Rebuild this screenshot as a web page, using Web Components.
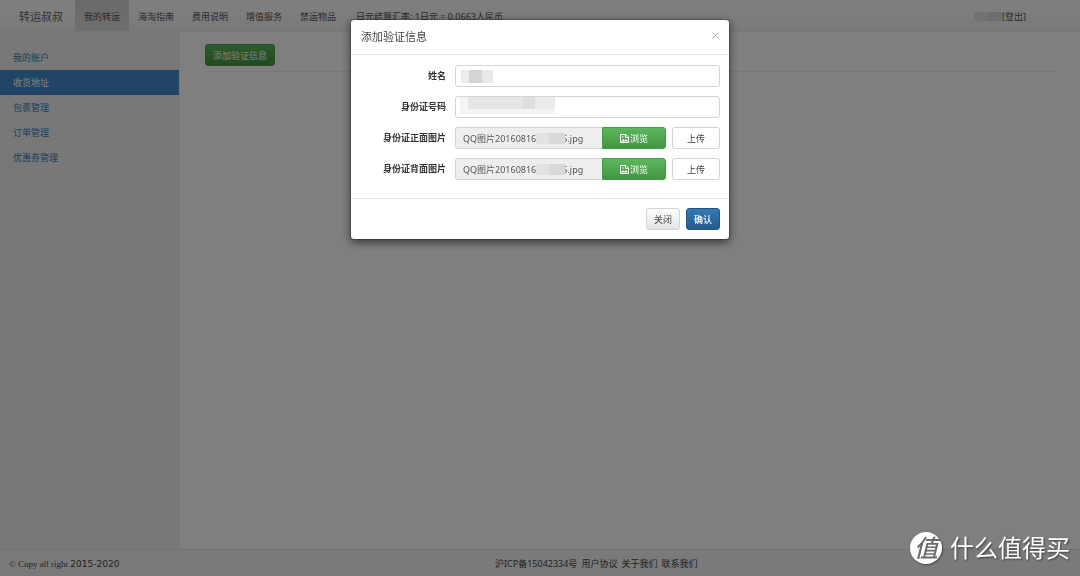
<!DOCTYPE html>
<html lang="zh-CN">
<head>
<meta charset="utf-8">
<title>转运叔叔</title>
<style>
html, body { margin: 0; height: 100%; }
body { font: 9px/14px "Noto Sans", "Noto Sans CJK SC", sans-serif; color: #333; background: #fff; }
</style>
</head>
<body>
<app-shell>
  <top-nav slot="nav"></top-nav>
  <side-menu slot="side"></side-menu>
  <address-page slot="main"></address-page>
  <site-footer slot="footer"></site-footer>
</app-shell>
<verify-dialog></verify-dialog>
<brand-mark></brand-mark>

<script>
function define(name, html) {
  customElements.define(name, class extends HTMLElement {
    constructor() {
      super();
      const template = document.createElement('template');
      template.innerHTML = html.replaceAll('{label}', this.getAttribute('label') || '');
      this.attachShadow({ mode: 'open' }).append(template.content.cloneNode(true));
    }
  });
}

define('app-shell', `
<style>
:host { display: flex; flex-direction: column; min-height: 100vh; }
.columns { flex: 1; display: grid; grid-template-columns: 1fr 5fr; }
</style>
<slot name="nav"></slot>
<div class="columns"><slot name="side"></slot><slot name="main"></slot></div>
<slot name="footer"></slot>`);

define('top-nav', `
<style>
:host { display: block; background: linear-gradient(#fff, #f4f4f4); border-bottom: 1px solid #ececec; }
nav { display: flex; height: 31px; align-items: stretch; padding-right: 54px; }
a, p { display: flex; align-items: center; box-sizing: border-box; margin: 0; padding: 2px 9px 0; color: #555; text-decoration: none; white-space: nowrap; }
.brand { font-size: 11px; padding: 2px 12px 0 19px; color: #666; }
.active { background: linear-gradient(#d4d4d4, #dedede); }
p { padding-left: 11px; }
.user { margin-left: auto; padding: 2px 0 0; }
.user i { width: 28px; height: 9px; background: linear-gradient(90deg, #e4e4e4 50%, #dcdcdc 50%); }
.user a { padding: 0; }
</style>
<nav>
  <a class="brand" href="#">转运叔叔</a>
  <a class="active" href="#">我的转运</a>
  <a href="#">海淘指南</a>
  <a href="#">费用说明</a>
  <a href="#">增值服务</a>
  <a href="#">禁运物品</a>
  <p>日元结算汇率: 1日元 = 0.0663人民币</p>
  <p class="user"><i></i><a href="#">[登出]</a></p>
</nav>`);

define('side-menu', `
<style>
:host { display: block; background: #f1f1f1; border-right: 1px solid #eee; padding-top: 13px; }
a { display: block; padding: 6px 13px 5px; color: #337ab7; text-decoration: none; }
.active { background: #428bca; color: #fff; }
</style>
<a href="#">我的账户</a>
<a class="active" href="#">收货地址</a>
<a href="#">包裹管理</a>
<a href="#">订单管理</a>
<a href="#">优惠券管理</a>`);

define('address-page', `
<style>
:host { display: block; padding: 12px 25px; }
.bar { padding-bottom: 5px; border-bottom: 1px solid #eee; }
ui-button { display: flex; width: 70px; }
</style>
<div class="bar"><ui-button kind="success">添加验证信息</ui-button></div>`);

define('site-footer', `
<style>
:host { display: grid; grid-template-columns: 11fr 13fr; align-items: center; box-sizing: border-box; height: 27px; padding-top: 2px; background: #f5f5f5; border-top: 1px solid #e7e7e7; color: #444; }
.copy { padding-left: 9px; font-family: "Liberation Serif", serif; }
.copy span { font: 9px "DejaVu Sans", sans-serif; }
.links { display: flex; gap: 4px; }
a { color: inherit; text-decoration: none; }
</style>
<div class="copy">© Copy all right <span>2015-2020</span></div>
<div class="links"><span>沪ICP备15042334号</span><a href="#">用户协议</a><a href="#">关于我们</a><a href="#">联系我们</a></div>`);

define('ui-button', `
<style>
:host { display: inline-flex; }
button { flex: 1; box-sizing: border-box; height: 22px; padding: 1px 0 0; border: 1px solid #d4d4d4; border-radius: 3px; font: inherit; color: #444; background: #fff; display: flex; align-items: center; justify-content: center; gap: 1px; white-space: nowrap; }
:host([kind=success]) button { background: linear-gradient(#5cb85c, #419641); border-color: #469a46; color: #fff; }
:host([kind=primary]) button { background: linear-gradient(#337ab7, #265a88); border-color: #245580; color: #fff; font-weight: 500; }
:host([kind=soft]) button { background: linear-gradient(#fff, #e4e4e4); }
:host([joined]) button { border-radius: 0 3px 3px 0; }
</style>
<button type="button"><slot></slot></button>`);

define('pixel-mask', `
<style>
:host { display: block; }
</style>`);

define('text-field', `
<style>
:host { display: grid; grid-template-columns: 86px 1fr; gap: 9px; align-items: center; }
label { text-align: right; font-weight: 700; }
div { position: relative; }
input { display: block; box-sizing: border-box; width: 100%; height: 22px; padding: 0 7px; border: 1px solid #d4d4d4; border-radius: 3px; font: inherit; color: #555; background: #fff; }
::slotted(*) { position: absolute; }
</style>
<label for="field">{label}</label>
<div><input id="field" type="text"><slot></slot></div>`);

define('file-field', `
<style>
:host { display: grid; grid-template-columns: 86px 1fr auto auto; align-items: center; }
label { text-align: right; font-weight: 700; }
output { margin-left: 9px; display: flex; align-items: center; box-sizing: border-box; height: 22px; padding: 1px 7px 0; border: 1px solid #d4d4d4; border-right: 0; border-radius: 3px 0 0 3px; background: #eee; color: #555; }
.mask { width: 29px; height: 11px; margin-right: -3px; z-index: 1; background: linear-gradient(90deg, #e2e2e2 45%, #d9d9d9 45%); }
.browse { width: 64px; }
.upload { width: 48px; margin-left: 6px; }
svg { width: 9px; height: 9px; }
</style>
<label for="file">{label}</label>
<output id="file"><span>QQ图片20160816</span><i class="mask"></i><span>5.jpg</span></output>
<ui-button class="browse" kind="success" joined>
  <svg viewBox="0 0 9 9" fill="none" stroke="#fff"><path d="M.5.5h5.500l2.500 2.500v5.500h-8z"/><path d="M5.500.5v3h3"/><path d="M1 7.500l2-2.500 1.500 1.500L6 5l2 2.500z" fill="#fff" stroke="none"/><circle cx="2.700" cy="3" r=".8" fill="#fff" stroke="none"/></svg>浏览</ui-button>
<ui-button class="upload">上传</ui-button>`);

define('verify-dialog', `
<style>
:host { position: fixed; inset: 0; background: rgba(0,0,0,.5); display: flex; justify-content: center; align-items: flex-start; }
section { box-sizing: border-box; width: 380px; max-width: 100%; margin-top: 19px; border: 1px solid rgba(0,0,0,.2); border-radius: 4px; background: #fff; background-clip: padding-box; box-shadow: 0 3px 9px rgba(0,0,0,.5); }
header { display: flex; align-items: center; justify-content: space-between; height: 34px; padding: 0 9px 0 10px; border-bottom: 1px solid #e5e5e5; }
h4 { margin: 0; font-size: 11px; font-weight: 400; color: #444; }
.close { border: 0; padding: 0; margin-bottom: 4px; width: 10px; height: 10px; background: none; display: flex; }
.close svg { margin: auto; width: 7px; height: 7px; }
form { display: grid; gap: 9px; padding: 10px 9px 18px; }
footer { display: flex; justify-content: flex-end; gap: 6px; padding: 9px; border-top: 1px solid #e5e5e5; }
footer ui-button { width: 34px; }
.m1 { left: 6px; top: 5px; width: 32px; height: 13px; background: linear-gradient(90deg, #ececec 25%, #d4d4d4 25% 65%, #e8e8e8 65%); }
.m2 { left: 5px; top: 1px; width: 95px; height: 17px; background: linear-gradient(90deg, transparent 8%, #e6e6e6 8% 66%, #dedede 66% 79%, #ebebeb 79%) top / 100% 12px no-repeat, #f4f4f4; }
</style>
<section role="dialog" aria-labelledby="title">
  <header><h4 id="title">添加验证信息</h4>
    <button class="close" type="button" aria-label="关闭"><svg viewBox="0 0 7 7" stroke="#aaa"><path d="M.5.5l6 6M6.500.5l-6 6"/></svg></button></header>
  <form>
    <text-field label="姓名"><pixel-mask class="m1"></pixel-mask></text-field>
    <text-field label="身份证号码"><pixel-mask class="m2"></pixel-mask></text-field>
    <file-field label="身份证正面图片"></file-field>
    <file-field label="身份证背面图片"></file-field>
  </form>
  <footer><ui-button kind="soft">关闭</ui-button><ui-button kind="primary">确认</ui-button></footer>
</section>`);

define('brand-mark', `
<style>
:host { position: fixed; right: 10px; bottom: 12px; display: flex; align-items: center; gap: 8px; color: #fff; font-size: 24px; line-height: 32px; text-shadow: 1px 1px 2px rgba(0,0,0,.5); }
.disc { width: 32px; height: 32px; border-radius: 50%; background: #fff; color: #6c6c6c; text-align: center; font-size: 24px; font-weight: 500; font-style: italic; text-shadow: none; box-shadow: 1px 1px 2px rgba(0,0,0,.4); }
</style>
<span class="disc">值</span><span>什么值得买</span>`);
</script>
</body>
</html>
